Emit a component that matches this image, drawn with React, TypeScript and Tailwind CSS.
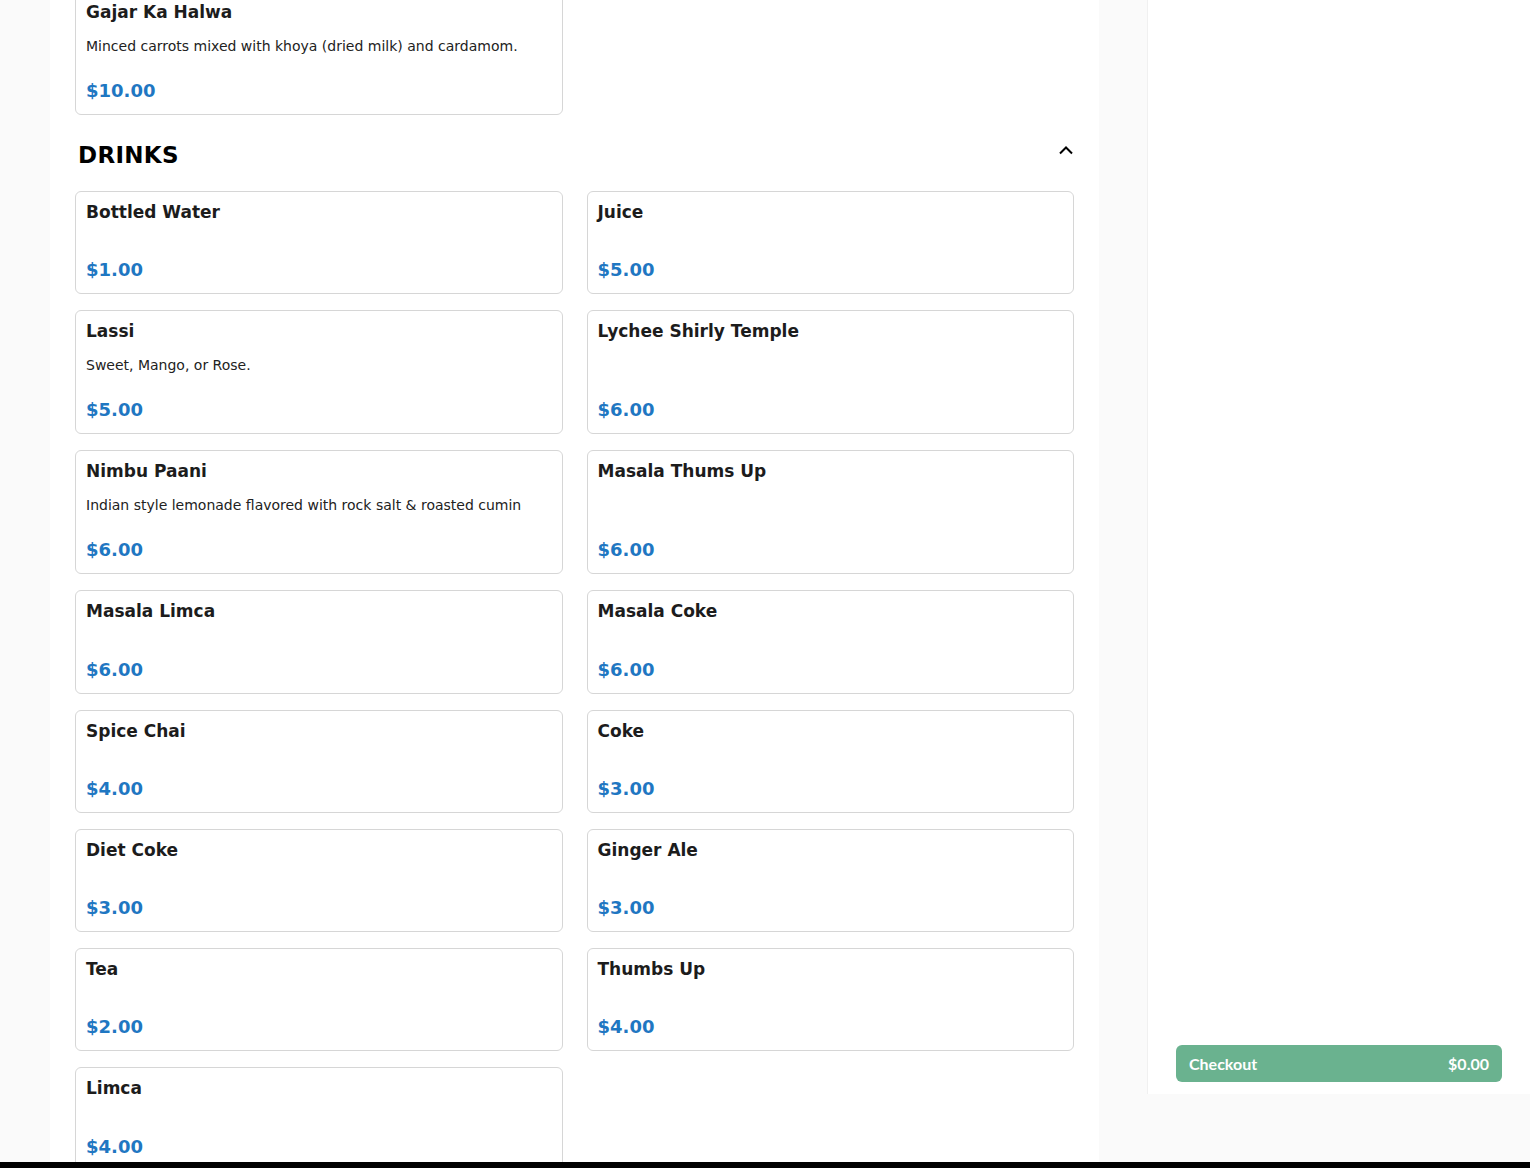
import React from "react";

type Item = { name: string; desc?: string; price: string };

const drinks: Array<Item> = [
  { name: "Bottled Water", price: "$1.00" },
  { name: "Juice", price: "$5.00" },
  { name: "Lassi", desc: "Sweet, Mango, or Rose.", price: "$5.00" },
  { name: "Lychee Shirly Temple", price: "$6.00" },
  {
    name: "Nimbu Paani",
    desc: "Indian style lemonade flavored with rock salt & roasted cumin",
    price: "$6.00",
  },
  { name: "Masala Thums Up", price: "$6.00" },
  { name: "Masala Limca", price: "$6.00" },
  { name: "Masala Coke", price: "$6.00" },
  { name: "Spice Chai", price: "$4.00" },
  { name: "Coke", price: "$3.00" },
  { name: "Diet Coke", price: "$3.00" },
  { name: "Ginger Ale", price: "$3.00" },
  { name: "Tea", price: "$2.00" },
  { name: "Thumbs Up", price: "$4.00" },
  { name: "Limca", price: "$4.00" },
];

const MenuCard = ({ item }: { item: Item }) => {
  return (
    <div className="flex flex-col bg-white border border-[#d6d6d6] rounded-md px-[10px] pt-[7px] pb-[10px] min-h-[103.3px]">
      <span className="text-[17px] leading-[27px] font-bold text-[#1c1c1c]">
        {item.name}
      </span>
      {item.desc && (
        <p className="text-[14px] leading-[21px] text-[#222] mt-[10px]">
          {item.desc}
        </p>
      )}
      <span className="mt-auto pt-[20px] text-[18px] leading-[27px] font-bold text-[#1f77c2]">
        {item.price}
      </span>
    </div>
  );
};

export default function App() {
  return (
    <div
      className="w-full h-[1168px] overflow-hidden flex flex-col bg-[#fafafa]"
      style={{ fontFamily: '"DejaVu Sans", sans-serif' }}
    >
      <div className="flex flex-1 min-h-0">
        <main className="ml-[50px] w-[1049px] bg-white px-[25px] overflow-hidden">
          <div className="-mt-[9px]">
            <div className="grid grid-cols-2 gap-x-[24px]">
              <MenuCard
                item={{
                  name: "Gajar Ka Halwa",
                  desc: "Minced carrots mixed with khoya (dried milk) and cardamom.",
                  price: "$10.00",
                }}
              />
            </div>
            <div className="flex items-center justify-between pl-[3px] pr-[1px] mt-[24px] mb-[19px]">
              <h2 className="text-[23px] leading-[33px] font-bold text-black tracking-[0.3px]">
                DRINKS
              </h2>
              <svg
                width="14"
                height="10"
                viewBox="0 0 14 10"
                fill="none"
                stroke="black"
                strokeWidth="2"
                className="-mt-[12px]"
              >
                <path d="M1 8.5 L7 2.5 L13 8.5" />
              </svg>
            </div>
            <div className="grid grid-cols-2 gap-x-[24px] gap-y-[16px]">
              {drinks.map((item) => (
                <MenuCard key={item.name} item={item} />
              ))}
            </div>
          </div>
        </main>
        <aside className="ml-[48px] flex-1 self-start h-[1094px] bg-white border-l border-[#f0f0f0] flex flex-col justify-end px-[28px] pb-[12px]">
          <button
            className="flex items-center justify-between h-[37px] rounded-md bg-[#6ab28f] px-[13px] text-white font-bold text-[16px]"
            style={{ fontFamily: "Lato, sans-serif" }}
          >
            <span>Checkout</span>
            <span>$0.00</span>
          </button>
        </aside>
      </div>
      <div className="h-[6px] bg-black shrink-0" />
    </div>
  );
}
